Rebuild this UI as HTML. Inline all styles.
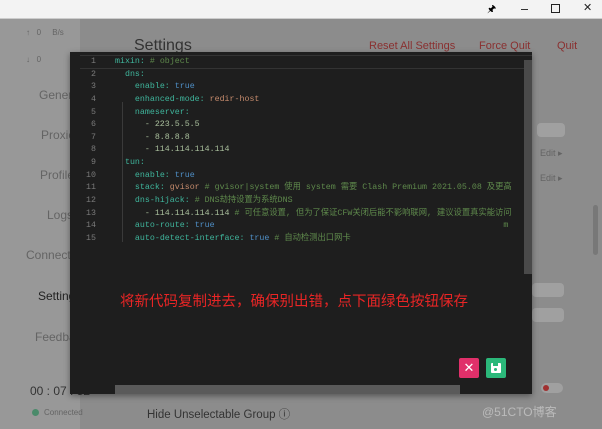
<!DOCTYPE html><html><head><meta charset="utf-8"><style>
html,body{margin:0;padding:0}
body{width:602px;height:429px;overflow:hidden;position:relative;background:rgb(140,140,140);font-family:"Liberation Sans","Noto Sans CJK SC",sans-serif}
.tb{position:absolute;left:0;top:0;width:602px;height:18px;background:#f3f3f3;border-bottom:1px solid #ccc;z-index:5}
.bg{position:absolute;left:0;top:19px;width:602px;height:410px;background:rgb(140,140,140)}
.side{position:absolute;left:0;top:19px;width:80px;height:410px;background:rgb(152,152,152)}
.a{position:absolute;color:rgb(100,100,100);font-size:12px}
.dlg{position:absolute;left:70px;top:52px;width:462px;height:342px;background:#1e1e1e;box-shadow:0 2px 6px rgba(0,0,0,.4)}
.code{position:absolute;left:0;top:4px;font-family:"Liberation Mono","Noto Sans CJK SC",monospace;font-size:8.3px;line-height:12.64px;white-space:pre;color:#c8c8c8}
.ln{position:absolute;left:10px;width:16px;text-align:right;color:#7a7a7a;font-family:"Liberation Mono",monospace;font-size:8.3px;line-height:12.64px;top:4px}
.k{color:#3fb59c}.b{color:#4f8fc6}.s{color:#c48a6c}.n{color:#a9bf9c}.c{color:#5f8a4c}
.pill{position:absolute;border-radius:4px;background:rgb(160,160,160)}
</style></head><body>
<div class="bg"></div>
<div class="tb"><span style="position:absolute;left:487px;top:2px;font-size:10px">&#x1F588;</span>
<span style="position:absolute;left:521px;top:9px;width:7px;height:1px;background:#333"></span>
<span style="position:absolute;left:551px;top:4px;width:7px;height:7px;border:1px solid #222"></span>
<span style="position:absolute;left:583px;top:1px;font-size:11px;color:#222">✕</span></div>
<div class="side"></div>
<div class="a" style="left:26px;top:28px;font-size:8px">↑ &nbsp; 0 &nbsp; &nbsp; B/s</div>
<div class="a" style="left:26px;top:55px;font-size:8px">↓ &nbsp; 0</div>
<div class="a" style="left:39px;top:88px">General</div>
<div class="a" style="left:41px;top:128px">Proxies</div>
<div class="a" style="left:40px;top:168px">Profiles</div>
<div class="a" style="left:47px;top:208px">Logs</div>
<div class="a" style="left:26px;top:248px">Connections</div>
<div class="a" style="left:38px;top:289px;color:#222">Settings</div>
<div class="a" style="left:35px;top:330px">Feedback</div>
<div class="a" style="left:30px;top:384px;color:#333">00 : 07 : 52</div>
<div style="position:absolute;left:32px;top:409px;width:7px;height:7px;border-radius:50%;background:#4a8a6a"></div>
<div class="a" style="left:44px;top:408px;font-size:8px">Connected</div>
<div class="a" style="left:134px;top:37px;font-size:16px;color:#333">Settings</div>
<div class="a" style="left:369px;top:40px;color:#8a3030;font-size:11px">Reset All Settings</div>
<div class="a" style="left:479px;top:40px;color:#8a3030;font-size:11px">Force Quit</div>
<div class="a" style="left:557px;top:40px;color:#8a3030;font-size:11px">Quit</div>
<div class="a" style="left:147px;top:406px;color:#333;font-size:11.5px">Hide Unselectable Group ⓘ</div>
<div class="a" style="left:540px;top:148px;font-size:9px">Edit ▸</div>
<div class="a" style="left:540px;top:173px;font-size:9px">Edit ▸</div>
<div class="pill" style="left:537px;top:123px;width:28px;height:14px"></div>
<div class="pill" style="left:532px;top:283px;width:32px;height:14px"></div>
<div class="pill" style="left:532px;top:308px;width:32px;height:14px"></div>
<div class="pill" style="left:541px;top:383px;width:22px;height:10px;border-radius:6px"></div>
<div style="position:absolute;left:543px;top:385px;width:6px;height:6px;border-radius:50%;background:#a03030"></div>
<div style="position:absolute;left:593px;top:205px;width:5px;height:50px;border-radius:3px;background:rgb(120,120,120)"></div>
<div class="a" style="left:482px;top:403px;color:#bbb;font-size:12px">@51CTO博客</div>
<div class="dlg">
<div class="ln">1<br>2<br>3<br>4<br>5<br>6<br>7<br>8<br>9<br>10<br>11<br>12<br>13<br>14<br>15</div>
<div style="position:absolute;left:10px;top:3px;width:452px;height:12px;border-top:1px solid #333;border-bottom:1px solid #333"></div>
<div class="code" style="left:45px"><span class="k">mixin:</span> <span class="c"># object</span>
  <span class="k">dns:</span>
    <span class="k">enable:</span> <span class="b">true</span>
    <span class="k">enhanced-mode:</span> <span class="s">redir-host</span>
    <span class="k">nameserver:</span>
      <span class="n">- 223.5.5.5</span>
      <span class="n">- 8.8.8.8</span>
      <span class="n">- 114.114.114.114</span>
  <span class="k">tun:</span>
    <span class="k">enable:</span> <span class="b">true</span>
    <span class="k">stack:</span> <span class="s">gvisor</span> <span class="c"># gvisor|system 使用 system 需要 Clash Premium 2021.05.08 及更高</span>
    <span class="k">dns-hijack:</span> <span class="c"># DNS劫持设置为系统DNS</span>
      <span class="n">- 114.114.114.114</span> <span class="c"># 可任意设置, 但为了保证CFW关闭后能不影响联网, 建议设置真实能访问</span>
    <span class="k">auto-route:</span> <span class="b">true</span>                                                          <span class="c">m</span>
    <span class="k">auto-detect-interface:</span> <span class="b">true</span> <span class="c"># 自动检测出口网卡</span></div>
<div style="position:absolute;left:52px;top:50px;width:1px;height:140px;background:#3a3a3a"></div>
<div style="position:absolute;left:454px;top:8px;width:8px;height:214px;background:#4a4a4a"></div>
<div style="position:absolute;left:0;top:238px;width:454px;text-align:center;color:#e82525;font-size:14.5px;font-family:'Noto Sans CJK SC',sans-serif"><span style="position:relative;left:-3px">将新代码复制进去，确保别出错，点下面绿色按钮保存</span></div>
<div style="position:absolute;left:389px;top:306px;width:20px;height:20px;background:#e0306a;border-radius:2px;color:#fff;text-align:center;font-size:13px;line-height:20px">✕</div>
<div style="position:absolute;left:416px;top:306px;width:20px;height:20px;background:#2bb87a;border-radius:2px"><div style="position:absolute;left:5px;top:5px;width:10px;height:10px;background:#fff;border-radius:1px"></div><div style="position:absolute;left:7px;top:5px;width:5px;height:3px;background:#2bb87a"></div><div style="position:absolute;left:8px;top:10px;width:3px;height:3px;background:#2bb87a;border-radius:50%"></div></div>
<div style="position:absolute;left:45px;top:333px;width:345px;height:9px;background:#5a5a5a"></div>
</div>
</body></html>
